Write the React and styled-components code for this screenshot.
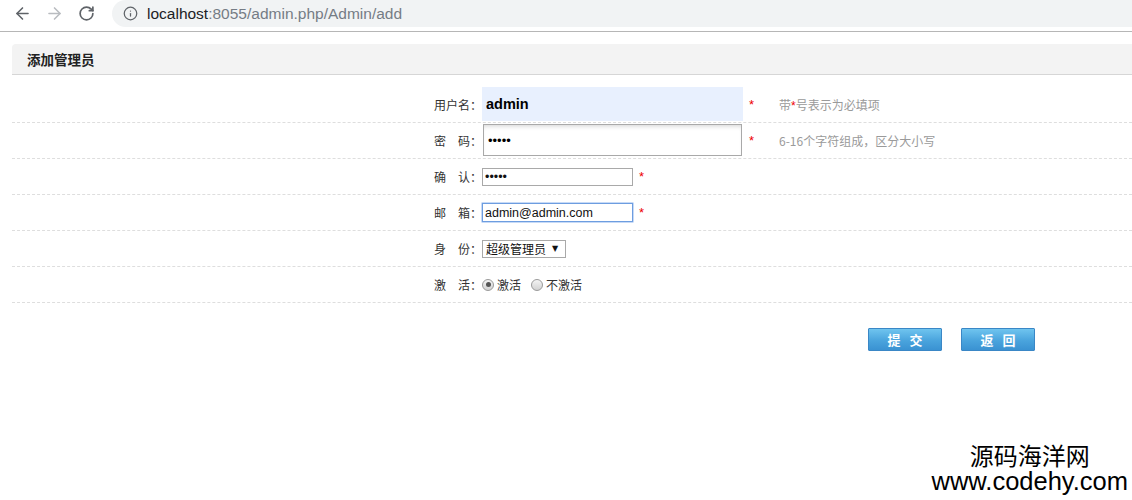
import React from "react";
import styled, { createGlobalStyle } from "styled-components";
import { ArrowLeft, ArrowRight, RotateCw, Info } from "lucide-react";

const Global = createGlobalStyle`
  html, body { margin: 0; padding: 0; background: #fff; overflow: hidden; }
  body { font-family: "Noto Sans CJK SC", "Liberation Sans", sans-serif; font-size: 12px; color: #333; }
  * { box-sizing: border-box; }
`;

const Page = styled.div`
  position: relative;
  width: 1132px;
  height: 500px;
  overflow: hidden;
`;

const Chrome = styled.div`
  height: 32px;
  display: flex;
  align-items: flex-start;
  border-bottom: 1px solid #b6b6b6;
  background: #fff;
`;

const NavBtn = styled.div`
  width: 32px;
  height: 27px;
  display: flex;
  align-items: center;
  justify-content: center;
  color: ${(p) => (p.$off ? "#b9bcc0" : "#5f6368")};
  margin-left: ${(p) => p.$ml || 0}px;
`;

const UrlPill = styled.div`
  flex: 1;
  margin-left: 10px;
  height: 27px;
  background: #f1f3f4;
  border-top-left-radius: 14px;
  border-bottom-left-radius: 14px;
  display: flex;
  align-items: center;
  padding-left: 11px;
  color: #5f6368;
`;

const UrlText = styled.span`
  margin-left: 9px;
  font-family: "Liberation Sans", Arial, sans-serif;
  font-size: 15.5px;
  color: #757c85;
`;

const Host = styled.span`
  color: #202124;
`;

const Content = styled.div`
  padding: 12px 0 0 12px;
`;

const Header = styled.div`
  height: 31px;
  background: #f3f3f3;
  border-bottom: 1px solid #d6d6d6;
  border-top-left-radius: 4px;
  padding-left: 15px;
  line-height: 30px;
  font-size: 13.5px;
  font-weight: bold;
  color: #222;
`;

const Row = styled.div`
  display: flex;
  align-items: center;
  height: ${(p) => p.$h || 36}px;
  padding-top: ${(p) => p.$pt || 0}px;
  padding-bottom: ${(p) => p.$pb || 0}px;
  border-bottom: 1px dashed #dedede;
`;

const Label = styled.div`
  width: 470px;
  flex: none;
  text-align: right;
  font-size: 12px;
  color: #333;
  white-space: pre;
`;

const Field = styled.div`
  display: flex;
  align-items: center;
`;

const BigInput = styled.input`
  width: ${(p) => p.$w}px;
  height: ${(p) => p.$h}px;
  margin-left: ${(p) => p.$ml || 0}px;
  border: ${(p) => (p.$auto ? "none" : "1px solid #a9a9a9")};
  background: ${(p) => (p.$auto ? "#e8f0fe" : "#fff")};
  box-shadow: ${(p) => (p.$inset ? "inset 0 4px 5px -3px rgba(0,0,0,0.18)" : "none")};
  padding: 0 4px;
  font-family: "Liberation Sans", Arial, sans-serif;
  font-size: ${(p) => p.$fs || 12}px;
  font-weight: ${(p) => (p.$bold ? "bold" : "normal")};
  color: #000;
  outline: none;
`;

const SmallInput = styled.input`
  width: 151px;
  height: ${(p) => p.$h || 18}px;
  border: 1px solid ${(p) => (p.$focus ? "#6d9de0" : "#a9a9a9")};
  box-shadow: ${(p) => (p.$focus ? "0 0 0 0.5px #8fb6ee" : "none")};
  padding: 0 2px;
  font-family: "Liberation Sans", Arial, sans-serif;
  font-size: 12.5px;
  color: #111;
  outline: none;
  background: #fff;
`;

const Star = styled.span`
  color: #e00;
  font-family: "Liberation Sans", Arial, sans-serif;
  font-size: 13px;
  margin-left: ${(p) => p.$ml || 6}px;
  width: 8px;
`;

const Hint = styled.span`
  margin-left: 22px;
  color: #9a9a9a;
  font-size: 12px;
`;

const RedStar = styled.span`
  color: #e00;
  font-family: "Liberation Sans", Arial, sans-serif;
`;

const SelectBox = styled.div`
  width: 84px;
  height: 18px;
  border: 1px solid #a9a9a9;
  display: flex;
  align-items: center;
  padding-left: 3px;
  font-size: 12px;
  color: #111;
  gap: 6px;
  background: #fff;
`;

const Caret = styled.span`
  font-size: 8px;
  color: #111;
  font-family: "DejaVu Sans", sans-serif;
`;

const RadioGroup = styled.label`
  display: flex;
  align-items: center;
  margin-right: ${(p) => p.$mr || 0}px;
  font-size: 12px;
  color: #333;
  gap: 3px;
`;

const Radio = styled.span`
  width: 12px;
  height: 12px;
  border-radius: 50%;
  border: 1px solid #9a9a9a;
  background: linear-gradient(#f4f4f4, #d2d2d2);
  display: flex;
  align-items: center;
  justify-content: center;
  &::after {
    content: "";
    width: 5px;
    height: 5px;
    border-radius: 50%;
    background: ${(p) => (p.$on ? "#555" : "transparent")};
  }
`;

const ButtonBar = styled.div`
  display: flex;
  gap: 19px;
  padding-left: 856px;
  margin-top: 25px;
`;

const Btn = styled.button`
  width: 74px;
  height: 23px;
  border: 1px solid #3a87c6;
  border-radius: 1px;
  background: linear-gradient(#6fc4ef, #4aa4dd 55%, #3a92d2);
  color: #fff;
  font-family: "Noto Sans CJK SC", sans-serif;
  font-weight: bold;
  font-size: 13px;
  letter-spacing: 9px;
  padding: 0 0 0 9px;
  line-height: 21px;
  cursor: pointer;
`;

const Watermark = styled.div`
  position: absolute;
  right: 4px;
  bottom: 7px;
  display: flex;
  flex-direction: column;
  align-items: center;
  color: #000;
`;

const WmCn = styled.div`
  font-family: "Noto Sans CJK SC", sans-serif;
  font-size: 24px;
  line-height: 24px;
  padding-bottom: 3px;
`;

const WmUrl = styled.div`
  font-family: "Liberation Sans", Arial, sans-serif;
  font-size: 25.5px;
  line-height: 23px;
`;

export default function App() {
  return (
    <Page>
      <Global />
      <Chrome>
        <NavBtn $ml={6}><ArrowLeft size={19} strokeWidth={2} /></NavBtn>
        <NavBtn $off><ArrowRight size={19} strokeWidth={2} /></NavBtn>
        <NavBtn><RotateCw size={17} strokeWidth={2.4} /></NavBtn>
        <UrlPill>
          <Info size={15} strokeWidth={2} />
          <UrlText><Host>localhost</Host>:8055/admin.php/Admin/add</UrlText>
        </UrlPill>
      </Chrome>
      <Content>
        <Header>添加管理员</Header>
        <Row $h={48} $pt={12} $pb={1}>
          <Label>用户名：</Label>
          <Field>
            <BigInput $auto $bold $fs={14.5} $w={261} $h={34} defaultValue="admin" />
            <Star>*</Star>
            <Hint>带<RedStar>*</RedStar>号表示为必填项</Hint>
          </Field>
        </Row>
        <Row $h={36} $pt={1} $pb={2}>
          <Label>密　码：</Label>
          <Field>
            <BigInput $inset $ml={1} $w={259} $h={32} $fs={13} type="password" defaultValue="admin" />
            <Star $ml={7}>*</Star>
            <Hint>6-16个字符组成，区分大小写</Hint>
          </Field>
        </Row>
        <Row>
          <Label>确　认：</Label>
          <Field>
            <SmallInput type="password" defaultValue="admin" />
            <Star>*</Star>
          </Field>
        </Row>
        <Row>
          <Label>邮　箱：</Label>
          <Field>
            <SmallInput $focus $h={19} defaultValue="admin@admin.com" />
            <Star>*</Star>
          </Field>
        </Row>
        <Row>
          <Label>身　份：</Label>
          <SelectBox>超级管理员<Caret>▼</Caret></SelectBox>
        </Row>
        <Row>
          <Label>激　活：</Label>
          <Field>
            <RadioGroup $mr={10}><Radio $on />激活</RadioGroup>
            <RadioGroup><Radio />不激活</RadioGroup>
          </Field>
        </Row>
        <ButtonBar>
          <Btn>提交</Btn>
          <Btn>返回</Btn>
        </ButtonBar>
      </Content>
      <Watermark>
        <WmCn>源码海洋网</WmCn>
        <WmUrl>www.codehy.com</WmUrl>
      </Watermark>
    </Page>
  );
}
